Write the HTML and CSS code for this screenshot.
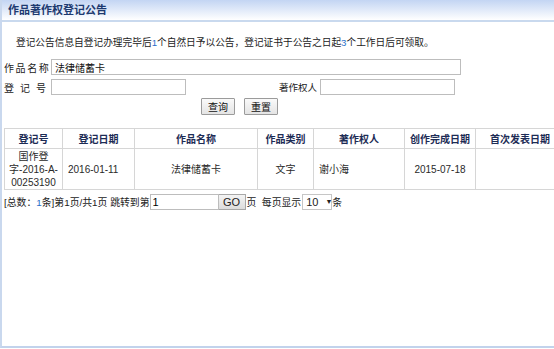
FILE: index.html
```html
<!DOCTYPE html>
<html lang="zh-CN">
<head>
<meta charset="utf-8">
<title>作品著作权登记公告</title>
<link rel="stylesheet" href="styles.css">
</head>
<body>
<div class="page">
  <div class="title">作品著作权登记公告</div>
  <p class="notice">登记公告信息自登记办理完毕后<span class="num">1</span>个自然日予以公告，登记证书于公告之日起<span class="num">3</span>个工作日后可领取。</p>
  <form class="search">
    <div class="row">
      <label class="lbl">作品名称</label>
      <input class="field field-long" type="text" value="法律储蓄卡">
    </div>
    <div class="row">
      <label class="lbl lbl-spaced">登 记 号</label>
      <input class="field field-short" type="text">
      <label class="lbl lbl-owner">著作权人</label>
      <input class="field field-short" type="text">
    </div>
    <div class="row row-buttons">
      <button class="btn" type="button">查询</button>
      <button class="btn" type="button">重置</button>
    </div>
  </form>
  <table class="grid">
    <colgroup>
      <col class="c1"><col class="c2"><col class="c3"><col class="c4"><col class="c5"><col class="c6"><col class="c7">
    </colgroup>
    <thead>
      <tr>
        <th>登记号</th><th>登记日期</th><th>作品名称</th><th>作品类别</th><th>著作权人</th><th>创作完成日期</th><th>首次发表日期</th>
      </tr>
    </thead>
    <tbody>
      <tr>
        <td class="center regno"><span class="line">国作登</span><span class="line">字-2016-A-</span><span class="line">00253190</span></td>
        <td>2016-01-11</td>
        <td class="center">法律储蓄卡</td>
        <td class="center">文字</td>
        <td>谢小海</td>
        <td class="center">2015-07-18</td>
        <td></td>
      </tr>
    </tbody>
  </table>
  <div class="pager">
    <span>[总数：<span class="num">1</span>条]第1页/共1页 跳转到第</span><input class="page-input" type="text" value="1"><button class="go" type="button">GO</button><span class="pg">页  每页显示</span><span class="select">10 <span class="arrow">▼</span></span><span>条</span>
  </div>
</div>
</body>
</html>
```

FILE: styles.css
```css
* { box-sizing: border-box; }
html, body { margin: 0; padding: 0; background: #fff; }
body {
  font-family: "Liberation Sans", "Noto Sans CJK SC", sans-serif;
  font-size: 10px;
  color: #222;
}
.page {
  width: 554px;
  height: 348px;
  border-left: 2px solid #c9d8ee;
  border-bottom: 2px solid #c2d3ec;
  overflow: hidden;
}
.title {
  height: 22px;
  padding-left: 6px;
  line-height: 21px;
  font-size: 11px;
  font-weight: bold;
  color: #1d3a70;
  background: linear-gradient(#c3d5f3, #ffffff);
  border-bottom: 2px solid #c9d9ee;
}
.notice {
  margin: 14px 0 0 14px;
  line-height: 14px;
  font-size: 9.7px;
  color: #222;
}
.num { color: #2a6fc9; }
.search { margin: 7px 0 0 0; }
.row {
  display: flex;
  align-items: center;
  height: 20px;
}
.lbl {
  width: 49px;
  padding-left: 2px;
  font-size: 10px;
  letter-spacing: 1.6px;
  white-space: pre;
}
.lbl-owner {
  width: auto;
  margin-left: 93px;
  margin-right: 3px;
  padding-left: 0;
  font-size: 9.5px;
  letter-spacing: 0;
}
.field {
  height: 16px;
  border: 1px solid #bdbdbd;
  padding: 0 3px;
  font-family: "Liberation Sans", "Noto Sans CJK SC", sans-serif;
  font-size: 10px;
  color: #111;
  outline: none;
}
.field-long { width: 410px; }
.field-short { width: 135px; }
.row-buttons {
  padding-left: 199px;
  gap: 9px;
  height: 19px;
}
.btn {
  width: 34px;
  height: 17px;
  padding: 0;
  font-family: "Liberation Sans", "Noto Sans CJK SC", sans-serif;
  font-size: 10px;
  color: #111;
  background: linear-gradient(#fafafa, #e4e4e4);
  border: 1px solid #9b9b9b;
  border-radius: 1px;
}
.grid {
  margin: 12px 0 0 2px;
  border-collapse: collapse;
  table-layout: fixed;
  width: 560px;
}
.c1 { width: 58px; }
.c2 { width: 72px; }
.c3 { width: 123px; }
.c4 { width: 56px; }
.c5 { width: 91px; }
.c6 { width: 71px; }
.c7 { width: 89px; }
.grid th, .grid td {
  border: 1px solid #d6d6d6;
  font-size: 10px;
  padding: 0 5px;
}
.grid th {
  height: 20px;
  font-weight: bold;
  color: #1d2c55;
  text-align: center;
}
.grid td {
  height: 41px;
  line-height: 13px;
  color: #2a2a2a;
  text-align: left;
}
.grid td.center { text-align: center; }
.grid td.regno { padding: 0 1px; }
.line { display: block; white-space: nowrap; }
.pager {
  display: flex;
  align-items: center;
  margin: 3px 0 0 2px;
  height: 17px;
  font-size: 9.85px;
  white-space: pre;
}
.page-input {
  width: 69px;
  height: 16px;
  border: 1px solid #bdbdbd;
  padding: 0 2px;
  font-family: "Liberation Sans", sans-serif;
  font-size: 11px;
  outline: none;
}
.go {
  width: 27px;
  height: 16px;
  padding: 0;
  font-family: "Liberation Sans", sans-serif;
  font-size: 11px;
  color: #222;
  background: linear-gradient(#f4f4f4, #dcdcdc);
  border: 1px solid #a8a8a8;
  border-left: none;
}
.pg { margin-left: 1px; }
.select {
  display: inline-flex;
  align-items: center;
  width: 30px;
  height: 16px;
  margin-left: 1px;
  padding-left: 3px;
  border: 1px solid #c6c6c6;
  font-size: 11px;
}
.arrow { font-size: 7px; margin-left: 4px; }
```
